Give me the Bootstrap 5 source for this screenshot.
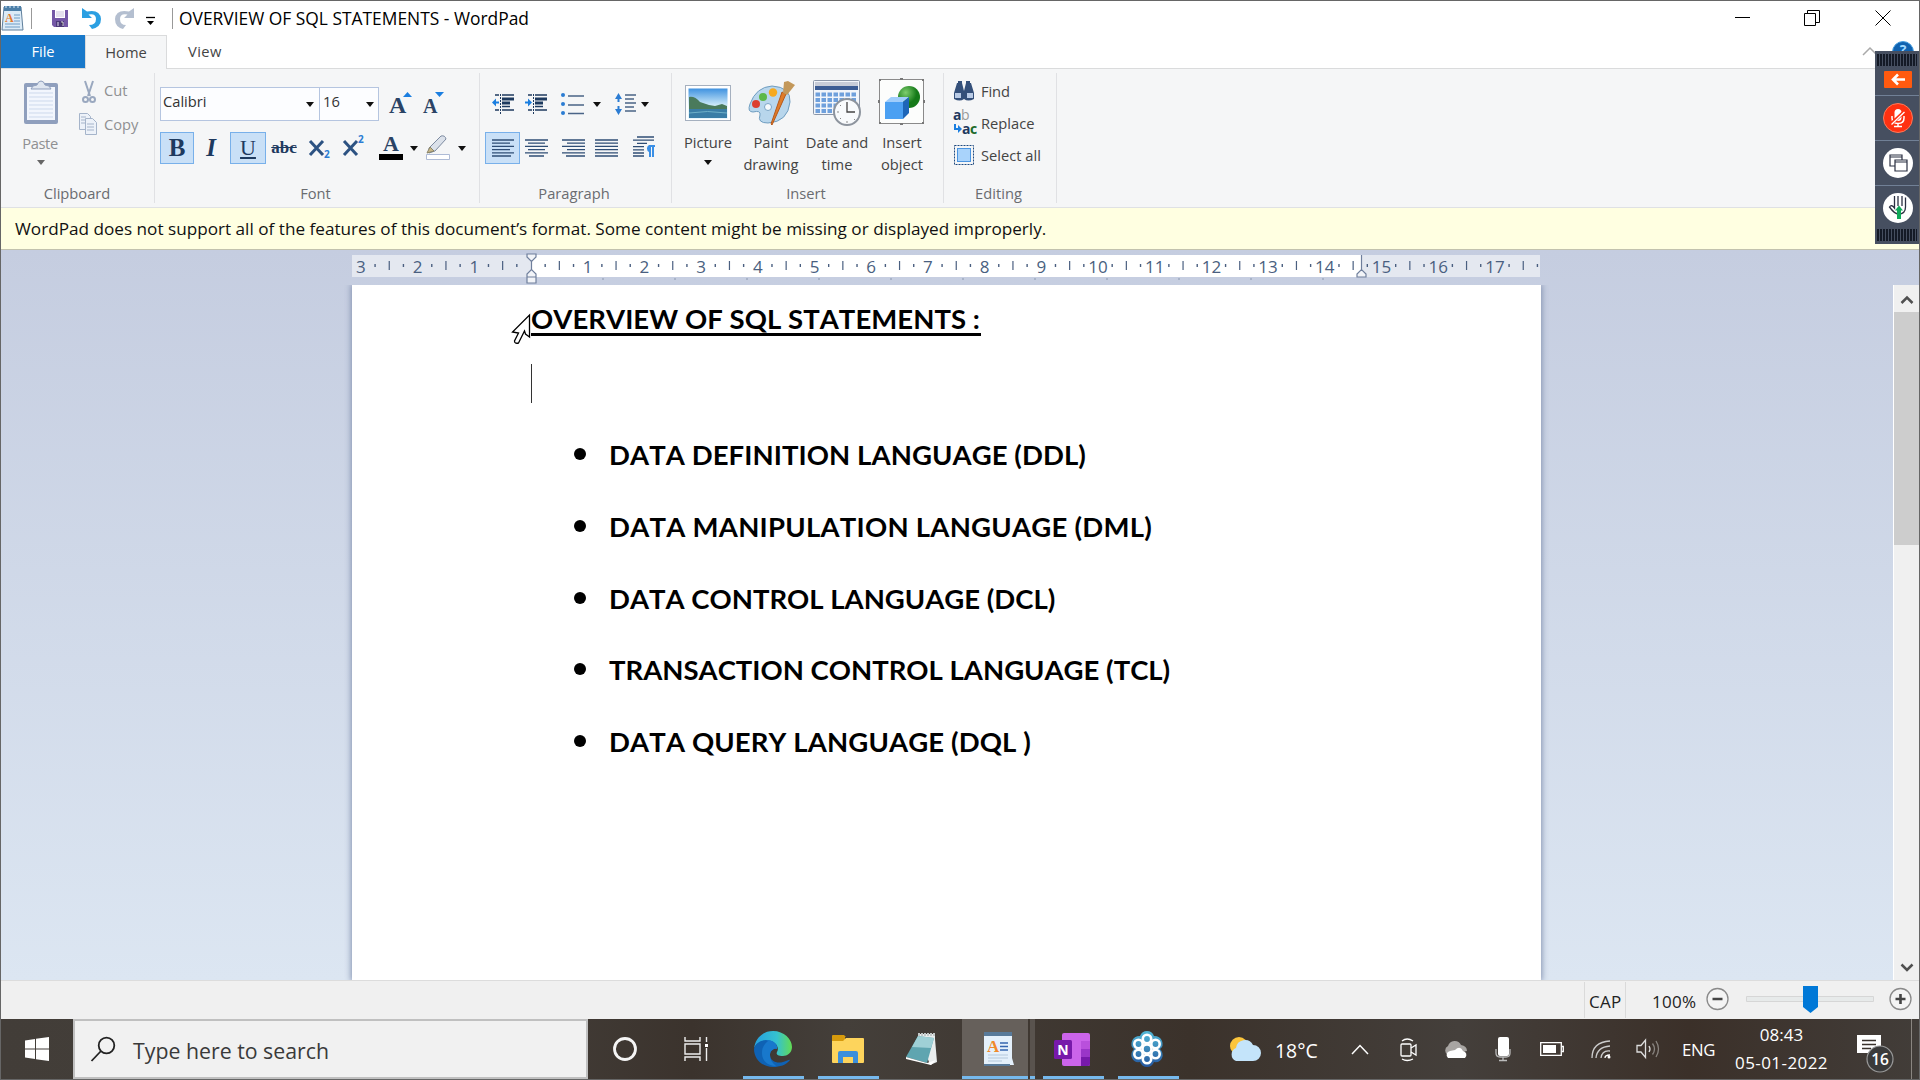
<!DOCTYPE html>
<html lang="en">
<head>
<meta charset="utf-8">
<title>OVERVIEW OF SQL STATEMENTS - WordPad</title>
<link rel="stylesheet" href="https://cdn.jsdelivr.net/npm/bootstrap@5.3.0/dist/css/bootstrap.min.css">
<style>
  html, body { height: 100%; overflow: hidden; }
  body { font-family: "Open Sans", "Noto Sans", sans-serif; font-size: 14.7px; line-height: 20px; color: #444; }
  svg { display: block; flex: none; overflow: visible; }
  .desk { width: 1920px; height: 1080px; background: #666; padding: 1px 1px 0 1px; }
  .nw { white-space: nowrap; }

  .titlebar { height: 34px; background: #fff; color: #000; font-size: 17.4px; line-height: 24px; }
  .vline { width: 1px; height: 21px; background: #999; }
  .tabs { height: 34px; background: #fff; border-bottom: 1px solid #dadbdc; }
  .tabs span { padding-bottom: 2px; }
  .tab-file { width: 84px; background: #1979ca; color: #fff; }
  .tab-home { width: 82px; background: #f5f6f7; border: 1px solid #dadbdc; border-bottom: 0; margin-bottom: -1px; }
  .ribbon { height: 139px; background: #f5f6f7; border-bottom: 1px solid #dfe1e4; padding: 4px 0 4px; }
  .rgroup { border-right: 1px solid #e0e1e4; }
  .rlabel { color: #6a6c70; padding-right: 3px; text-align: center; height: 20px; }
  .off { color: #8f9092; }
  .combo { height: 34px; border: 1px solid #b5c5e0; background: #fcfdff; color: #333; line-height: 20px; }
  .combo span { padding-bottom: 6px; }
  .tb { height: 32px; display: flex; align-items: center; justify-content: center; flex: none; color: #1e3a5f; }
  .tb-on { background: #c9e0f7; border: 1px solid #78b0ea; }
  .serif { font-family: "Liberation Serif", serif; }
  .caret { width: 0; border: 4px solid transparent; border-top: 5px solid #111; border-bottom: 0; }
  .big { text-align: center; line-height: 21.5px; }

  .notice { height: 42px; background: #ffffe1; color: #111; font-size: 17.17px; border-bottom: 1px solid #c2c2ae; padding-top: 1px; }
  .work { height: 730px; background: linear-gradient(#c5cde0, #dce6f2); }
  .ruler { height: 35px; }
  .sheet { width: 1189px; height: 695px; background: #fff; box-shadow: 0 0 6px 1px #8492b0; color: #000;
           font-family: Lato, sans-serif; font-weight: 700; font-size: 27.5px; font-kerning: none; line-height: 40px; padding: 14px 0 0 179px; clip-path: inset(0 -8px 0 -8px); }
  .sheet h1 { font: inherit; margin: 0; border-bottom: 3px solid #000; width: 450px; line-height: 40px; height: 37px; letter-spacing: .05px; }
  .sheet ul { list-style: none; margin: 0; padding: 32px 0 0 43px; }
  .sheet li { height: 71.8px; }
  .sheet li:nth-child(1) { letter-spacing: .08px; }
  .sheet li:nth-child(2) { letter-spacing: .25px; }
  .sheet li:nth-child(5) { letter-spacing: .13px; }
  .dot { width: 12px; height: 12px; border-radius: 50%; background: #000; margin: 13px 23px 0 0; }
  .insertion { width: 1px; height: 39px; background: #333; margin-top: 28px; }
  .sbar { width: 26px; background: #f0f0f0; border-left: 1px solid #fff; }
  .sthumb { height: 233px; background: #cdcdcd; }

  .status { height: 39px; background: #f0f0f0; border-top: 1px solid #dcdcdc; font-size: 17px; color: #222; }
  .status span { padding-top: 3px; letter-spacing: .3px; }
  .ssep { width: 1px; height: 36px; background: #dadada; }
  .taskbar { height: 61px; border-bottom: 1px solid #666; color: #fff;
     background: linear-gradient(90deg, #423d38 0, #45403b 24%, #3b332d 36%, #443f3a 44%, #3b322b 62%, #443f3b 76%, #3b3029 88%, #423d39 100%); }
  .search { width: 515px; background: #f1f1f1; border: 2px solid #c0c0c0; color: #3a3a3a; font-size: 21.3px; }
  .task { width: 61px; height: 60px; display: flex; align-items: center; justify-content: center; flex: none; }
  .run { border-bottom: 3px solid #76b9ed; padding-top: 3px; }
  .cur { background: #66605b; width: 66px; }

  .dock { position: absolute; left: 1875px; top: 51px; width: 44px; height: 193px; background: #464f60; }
  .hatch { height: 12px; margin: 0 2px; background: repeating-linear-gradient(90deg, #141a26 0 2px, #464f60 2px 3px); }
  .dcell { height: 45px; border-bottom: 1px solid #718096; padding-left: 2px; }
  .over { position: absolute; }
</style>
<script src="https://cdn.jsdelivr.net/npm/bootstrap@5.3.0/dist/js/bootstrap.bundle.min.js"></script>
</head>
<body>
<div class="desk d-flex flex-column position-relative">

  <!-- title bar -->
  <div class="titlebar d-flex align-items-center">
    <svg class="ms-0" width="24" height="28" viewBox="0 0 24 28"><path d="M3 3h17l2 23H1z" fill="#dcebf7" stroke="#5f7f9c"/><path d="M3 2h17v5H3z" fill="#4c7fa8"/><path d="M4 3h2M8 3h2M12 3h2M16 3h2" stroke="#d8ecfa"/><text x="4" y="18" class="serif" font-size="12" font-weight="700" fill="#e37b2c">A</text><path d="M13 11h6M13 14h6M13 17h6M4 20h15M4 23h15" stroke="#6f9cc4"/></svg>
    <div class="vline" style="margin-left:6px"></div>
    <svg style="margin-left:20px" width="16" height="17" viewBox="0 0 16 17"><path d="M0 0h16v17H2l-2-2z" fill="#7458a6"/><path d="M3 0h10v8H3z" fill="#fff"/><path d="M4 2h8M4 4h8M4 6h8" stroke="#c9c2dc"/><path d="M4 11h8v6H4z" fill="#4b3878"/><path d="M6 12v4M9 12h2v4" stroke="#e6e0f2"/></svg>
    <svg style="margin-left:14px" width="20" height="21" viewBox="0 0 20 21"><path d="M0 0v10h10L6.500 6.500Q14 5 14 11t-7 6l3 4q9-2 9-10Q18 1 5 3.500z" fill="#2b9fe2"/></svg>
    <svg style="margin-left:12px" width="20" height="21" viewBox="0 0 20 21"><path d="M20 0v10H10l3.500-3.500Q6 5 6 11t6 6l-3 4Q1 19 1 11 2 1 15 3.500z" fill="#b4bfd0"/></svg>
    <svg style="margin-left:12px;margin-top:6px" width="10" height="10" viewBox="0 0 10 10"><path d="M0 1.500h9" stroke="#000" stroke-width="1.300"/><path d="M1 5h7L4.500 9z"/></svg>
    <div class="vline" style="margin-left:16px"></div>
    <span class="nw" style="margin-left:6px">OVERVIEW OF SQL STATEMENTS - WordPad</span>
    <svg class="ms-auto" style="margin-right:28px" width="156" height="16" viewBox="0 0 156 16" fill="none" stroke="#000"><path d="M0 7.500h15M69.500 3.500h11v12h-11zM72.500 3.500v-3h12v12h-4M140.500.500l15 15M155.500.500l-15 15"/></svg>
  </div>

  <!-- tabs -->
  <div class="tabs d-flex">
    <div class="tab-file d-flex justify-content-center align-items-center"><span>File</span></div>
    <div class="tab-home d-flex justify-content-center align-items-center"><span>Home</span></div>
    <div class="d-flex align-items-center" style="padding-left:21px"><span style="letter-spacing:.4px">View</span></div>
    <svg class="ms-auto" style="margin-right:5px" width="51" height="34" viewBox="0 0 51 34"><path d="M0 20l7-7 7 7" fill="none" stroke="#aaa" stroke-width="1.500"/><circle cx="40" cy="17" r="10.500" fill="#0f62b0" stroke="#4aa0e0"/><text x="40" y="20" font-size="14" font-weight="700" fill="#9fd8ff" text-anchor="middle">?</text></svg>
  </div>

  <!-- ribbon -->
  <div class="ribbon d-flex">
    <div class="rgroup d-flex flex-column justify-content-between" style="width:154px">
      <div class="d-flex off">
        <div class="d-flex flex-column align-items-center" style="width:78px;padding-top:8px;padding-left:2px">
          <svg width="36" height="44" viewBox="0 0 36 44"><rect x="1" y="2" width="34" height="41" rx="2" fill="#8f9fbd"/><path d="M4 6h28v33H4z" fill="#f2f6fd"/><path d="M6 12h24M6 16h24M6 20h24M6 24h24M6 28h24M6 32h24M6 36h24" stroke="#cdd9ec"/><path d="M8 8q1-4 6-4 1-4 4-4t4 4q5 0 6 4z" fill="#dfe6f0" stroke="#8f9fbd"/></svg>
          <span style="margin-top:8px;letter-spacing:-.4px;margin-right:2px">Paste</span>
          <i class="caret" style="border-top-color:#666;margin-top:7px;margin-right:1px"></i>
        </div>
        <div>
          <div class="d-flex align-items-center" style="margin-top:7px"><svg style="margin:0 8px 0 3px" width="14" height="23" viewBox="0 0 14 23" fill="none" stroke="#9aa8bf" stroke-width="2"><path d="M3 0l5 15M11 0L6 15"/><circle cx="3.500" cy="18.500" r="2.500"/><circle cx="10.500" cy="18.500" r="2.500"/></svg><span class="pb-1">Cut</span></div>
          <div class="d-flex align-items-center" style="margin-top:9px"><svg style="margin:0 7px 0 0" width="18" height="22" viewBox="0 0 18 22" fill="#edf2f9" stroke="#a5b4ca"><path d="M.500.500h8l3 3v13H.500z"/><path d="M6.500 5.500h7l4 4v12h-11z"/><path d="M8 11h7M8 14h7M8 17h7M2 4h5M2 7h4M2 10h4"/></svg><span>Copy</span></div>
        </div>
      </div>
      <div class="rlabel" style="padding-right:1px"><span>Clipboard</span></div>
    </div>

    <div class="rgroup d-flex flex-column justify-content-between" style="width:325px">
      <div style="padding:14px 0 0 5px">
        <div class="d-flex align-items-center">
          <div class="combo d-flex align-items-center" style="width:160px;padding-left:2px"><span>Calibri</span><i class="caret ms-auto" style="margin-right:5px"></i></div>
          <div class="combo d-flex align-items-center" style="width:60px;margin-left:-1px;padding-left:3px"><span>16</span><i class="caret ms-auto" style="margin-right:4px"></i></div>
          <div class="tb" style="width:44px"><svg width="24" height="24" viewBox="0 0 24 24"><text x="0" y="21" class="serif" font-weight="700" font-size="24" fill="#2a4365">A</text><path d="M14 5l4.500-5L23 5z" fill="#1a7ee0"/></svg></div>
          <div class="tb" style="width:22px"><svg width="22" height="24" viewBox="0 0 22 24"><text x="0" y="21" class="serif" font-weight="700" font-size="20" fill="#2a4365">A</text><path d="M12 0l4.500 5L21 0z" fill="#1a7ee0"/></svg></div>
        </div>
        <div class="d-flex align-items-center" style="margin-top:11px">
          <div class="tb tb-on serif fw-bold" style="width:34px;font-size:25px">B</div>
          <div class="tb serif fst-italic fw-bold" style="width:34px;font-size:25px">I</div>
          <div class="tb tb-on serif text-decoration-underline" style="width:36px;margin-left:2px;font-size:22px">U</div>
          <div class="tb serif fw-bold text-decoration-line-through" style="width:36px;font-size:17px">abc</div>
          <div class="tb" style="width:36px"><svg width="22" height="20" viewBox="0 0 22 20"><path d="M1 3l13 14M14 3L1 17" stroke="#2c5282" stroke-width="3"/><text x="15" y="20" font-size="10" font-weight="700" fill="#2b7cd3">2</text></svg></div>
          <div class="tb" style="width:32px"><svg width="22" height="20" viewBox="0 0 22 20"><path d="M1 3l13 14M14 3L1 17" stroke="#2c5282" stroke-width="3"/><text x="15" y="5" font-size="10" font-weight="700" fill="#2b7cd3">2</text></svg></div>
          <div class="tb" style="width:42px"><svg width="24" height="24" viewBox="0 0 24 24"><text x="12" y="15" text-anchor="middle" class="serif" font-weight="700" font-size="22" fill="#2a4365">A</text><path d="M0 18h24v6H0z"/></svg></div>
          <i class="caret" style="margin-left:-2px"></i>
          <div class="tb" style="width:40px"><svg width="24" height="24" viewBox="0 0 24 24"><path d="M3 12L15 0q4-1 5 3L9 15l-6 2z" fill="#dbe1ea" stroke="#7c8aa0"/><path d="M1 17l3-6 4 4z" fill="#c9b98a" stroke="#8a8468"/><path d="M.500 18.500h23v5H.500z" fill="#fff" stroke="#aebbd6"/></svg></div>
          <i class="caret"></i>
        </div>
      </div>
      <div class="rlabel"><span>Font</span></div>
    </div>

    <div class="rgroup d-flex flex-column justify-content-between" style="width:192px">
      <div style="padding:14px 0 0 5px">
        <div class="d-flex align-items-center" style="height:34px">
          <div class="tb" style="width:36px"><svg width="22" height="20" viewBox="0 0 22 20" stroke="#1e3a5f" stroke-width="1.500"><path d="M3 1h4M3 16h4M10 1h12M10 16h12M10 12.500h8"/><path d="M10 5h12M10 9h8" stroke-width="3"/><path d="M8.500 0v20" stroke-width="1" stroke-dasharray="2 1"/><path d="M0 8.500l4-4v3h3v2H4v3z" fill="#1a7ee0" stroke="none"/></svg></div>
          <div class="tb" style="width:28px;padding-left:2px"><svg width="22" height="20" viewBox="0 0 22 20" stroke="#1e3a5f" stroke-width="1.500"><path d="M3 1h4M3 16h4M10 1h12M10 16h12M10 12.500h8"/><path d="M10 5h12M10 9h8" stroke-width="3"/><path d="M8.500 0v20" stroke-width="1" stroke-dasharray="2 1"/><path d="M7 8.500l-4-4v3H0v2h3v3z" fill="#1a7ee0" stroke="none"/></svg></div>
          <div class="tb" style="width:47px"><svg width="23" height="22" viewBox="0 0 23 22"><g fill="#2b7cd3"><circle cx="2" cy="2" r="2"/><circle cx="2" cy="11" r="2"/><circle cx="2" cy="20" r="2"/></g><path d="M7 3h16M7 12h16M7 20.500h16" stroke="#4a6487" stroke-width="1.500"/></svg></div>
          <i class="caret" style="margin-left:-3px"></i>
          <div class="tb" style="width:33px;margin-left:8px"><svg width="21" height="22" viewBox="0 0 21 22"><path d="M3.500 0l3.500 6h-2.500v3h-2V6H0zM3.500 22L0 16h2.500v-3h2v3H7z" fill="#2b7cd3"/><path d="M10 2h11M10 6h9M10 10h11M10 14h9M10 18h11" stroke="#4a6487" stroke-width="1.500"/></svg></div>
          <i class="caret" style="margin-left:-1px"></i>
        </div>
        <div class="d-flex align-items-center" style="margin-top:11px">
          <div class="tb tb-on" style="width:35px"><svg width="22" height="18" viewBox="0 0 22 18" stroke="#2f4d75" stroke-width="1.300"><path d="M0 1h22M0 4.200h18M0 7.400h22M0 10.600h18M0 13.800h22M0 17h19"/></svg></div>
          <div class="tb" style="width:33px"><svg width="23" height="18" viewBox="0 0 23 18" stroke="#2f4d75" stroke-width="1.300"><path d="M0 1h23M3 4.200h17M0 7.400h23M3 10.600h17M0 13.800h23M4 17h15"/></svg></div>
          <div class="tb" style="width:40px"><svg width="23" height="18" viewBox="0 0 23 18" stroke="#2f4d75" stroke-width="1.300"><path d="M0 1h23M5 4.200h18M0 7.400h23M5 10.600h18M0 13.800h23M4 17h19"/></svg></div>
          <div class="tb" style="width:27px"><svg width="23" height="18" viewBox="0 0 23 18" stroke="#2f4d75" stroke-width="1.300"><path d="M0 1h23M0 4.200h23M0 7.400h23M0 10.600h23M0 13.800h23M0 17h23"/></svg></div>
          <div class="tb" style="width:48px;padding-bottom:3px"><svg width="22" height="21" viewBox="0 0 22 21"><path d="M4 1h17M0 4.200h21M4 7.400h10M0 10.600h11M0 13.800h11M0 17h11M0 20h11" stroke="#2f4d75" stroke-width="1.300"/><path d="M22 9h-6a4 4 0 0 0 0 7v5h2V11h1v10h2V11h1z" fill="#3a8fe6"/></svg></div>
        </div>
      </div>
      <div class="rlabel"><span>Paragraph</span></div>
    </div>

    <div class="rgroup d-flex flex-column justify-content-between" style="width:272px">
      <div class="d-flex" style="padding:7px 0 0 3px">
        <div class="big d-flex flex-column align-items-center" style="width:66px">
          <svg width="46" height="46" viewBox="0 0 46 46"><defs><linearGradient id="sky" x1="0" y1="0" x2="0" y2="1"><stop offset="0" stop-color="#3f92e0"/><stop offset=".6" stop-color="#d8f0fa"/><stop offset="1" stop-color="#cfeaf8"/></linearGradient></defs><rect x=".5" y="5.500" width="45" height="35" fill="#fff" stroke="#a5b0bf"/><path d="M3.500 8.500h39v30h-39z" fill="url(#sky)"/><path d="M4 17q6-1 11 5l9 3 6 1 7-2 5 2v4H4z" fill="#4a7a5c"/><path d="M4 29h38v9H4z" fill="#3a7da6"/><path d="M4 33q18-3 38 0" stroke="#6fb0c8" fill="none"/></svg>
          <span style="margin-top:6px">Picture</span><i class="caret" style="margin-top:6px"></i>
        </div>
        <div class="big d-flex flex-column align-items-center" style="width:60px">
          <svg width="47" height="46" viewBox="0 0 47 46"><path d="M24 6Q43 7 42 22 40 42 20 43 9 43 12 35 13 30 5 32-1 32 2 24 8 7 24 6z" fill="#b8d6ec" stroke="#6f9dc0"/><circle cx="8" cy="24" r="4" fill="#dc3f2f"/><circle cx="15" cy="17" r="4" fill="#5cb848"/><circle cx="25" cy="12.500" r="4.200" fill="#f6a91e"/><circle cx="20" cy="27" r="3.500" fill="#f5f9fc" stroke="#7ba5c6"/><path d="M34 12l4 2-14 31-1-1z" fill="#e07b28" stroke="#b5581a"/><path d="M36 2l4-1 7 4-8 10-4-2z" fill="#c3985a"/></svg>
          <span style="margin-top:6px">Paint</span><span>drawing</span>
        </div>
        <div class="big d-flex flex-column align-items-center" style="width:72px">
          <svg width="48" height="46" viewBox="0 0 48 46"><rect x=".5" y=".5" width="46" height="34" rx="1" fill="#f2f5fa" stroke="#8b96a8"/><path d="M2 2h43v4H2z" fill="#c7ccd8"/><path d="M2 6h43v4H2z" fill="#3b5c94"/><g stroke="#6fa0dc" stroke-width="4" stroke-dasharray="4.500 1.500"><path d="M2.500 14.500h41M2.500 20h41M2.500 25.500h41M2.500 31h20"/></g><circle cx="34" cy="32" r="13" fill="#f8fafc" stroke="#8d949e" stroke-width="2"/><path d="M34 22v10h8" fill="none" stroke="#444" stroke-width="1.300"/><path d="M34 41v2M24 32h2M27 25l1 1M41 39l1 1M27 39l1-1" stroke="#888"/></svg>
          <span style="margin-top:6px" class="nw">Date and</span><span>time</span>
        </div>
        <div class="big d-flex flex-column align-items-center" style="width:60px;margin-left:-1px">
          <svg width="46" height="46" viewBox="0 0 46 46"><defs><radialGradient id="ball" cx=".35" cy=".3"><stop offset="0" stop-color="#7fce6e"/><stop offset="1" stop-color="#157a18"/></radialGradient></defs><g transform="translate(0 -1)"><rect x=".5" y=".5" width="44" height="44" fill="#fcfdfc" stroke="#8a8a8a"/><g fill="#777"><path d="M0 0h2v2H0zM21-1h3v2h-3zM43 0h2v2h-2zM-1 21h2v3h-2zM44 21h2v3h-2zM0 43h2v2H0zM21 44h3v2h-3zM43 43h2v2h-2z"/></g><circle cx="30" cy="18" r="11" fill="url(#ball)"/><path d="M6 23l6-5h18l-6 5z" fill="#9fcdfb"/><path d="M6 23h18v17H6z" fill="#4ba0f2"/><path d="M24 23l6-5v16l-6 6z" fill="#1e66b8"/></g></svg>
          <span style="margin-top:6px">Insert</span><span>object</span>
        </div>
      </div>
      <div class="rlabel"><span>Insert</span></div>
    </div>

    <div class="rgroup d-flex flex-column justify-content-between" style="width:113px">
      <div style="padding:6px 0 0 9px">
        <div class="d-flex align-items-center" style="height:24px"><svg width="22" height="20" viewBox="0 0 22 20" fill="#34507a"><path d="M4 2h5l2 8v8q-4 3-10 0V12zM18 2h-5l-2 8v8q4 3 10 0V12z"/><path d="M2 12h6v5H2zM14 12h6v5h-6z" fill="#b9cbe6"/><path d="M5 0h4v3H5zM13 0h4v3h-4z"/></svg><span style="margin-left:6px;letter-spacing:-.1px">Find</span></div>
        <div class="d-flex align-items-center" style="height:24px;margin-top:8px"><svg width="24" height="24" viewBox="0 0 24 24" font-weight="700"><text x="0" y="9" font-size="14" fill="#1e3a5f">a</text><text x="8" y="9" font-size="14" font-weight="400" fill="#999">b</text><text x="9" y="23" font-size="14" fill="#1e3a5f">a</text><text x="17" y="23" font-size="14" fill="#1c6b2a">c</text><path d="M2 13v5h4" fill="none" stroke="#1a7ee0" stroke-width="2"/><path d="M5 14l4 4-4 4z" fill="#1a7ee0"/></svg><span style="margin-left:4px">Replace</span></div>
        <div class="d-flex align-items-center" style="height:24px;margin-top:8px"><svg width="22" height="20" viewBox="0 0 22 20"><rect x="1.500" y=".5" width="19" height="19" fill="none" stroke="#1e4a80" stroke-dasharray="2 1"/><rect x="4.500" y="3.500" width="13" height="13" fill="#a9d3fb" stroke="#4a94e0"/></svg><span class="nw" style="margin-left:6px">Select all</span></div>
      </div>
      <div class="rlabel"><span>Editing</span></div>
    </div>
  </div>

  <div class="notice d-flex align-items-center nw"><span style="margin-left:14px">WordPad does not support all of the features of this document’s format. Some content might be missing or displayed improperly.</span></div>

  <!-- workspace -->
  <div class="work d-flex">
    <div style="width:351px"></div>
    <div>
      <svg class="ruler" id="ruler" width="1189" height="35"></svg>
      <div class="sheet">
        <h1 class="nw">OVERVIEW OF SQL STATEMENTS :</h1>
        <div class="insertion"></div>
        <ul>
          <li class="d-flex nw"><i class="dot"></i><span>DATA DEFINITION LANGUAGE (DDL)</span></li>
          <li class="d-flex nw"><i class="dot"></i><span>DATA MANIPULATION LANGUAGE (DML)</span></li>
          <li class="d-flex nw"><i class="dot"></i><span>DATA CONTROL LANGUAGE (DCL)</span></li>
          <li class="d-flex nw"><i class="dot"></i><span>TRANSACTION CONTROL LANGUAGE (TCL)</span></li>
          <li class="d-flex nw"><i class="dot"></i><span>DATA QUERY LANGUAGE (DQL )</span></li>
        </ul>
      </div>
    </div>
    <div class="sbar ms-auto d-flex flex-column align-items-center" style="margin-top:35px">
      <svg width="14" height="27" viewBox="0 0 14 27"><path d="M1.500 18l5.500-5.500 5.500 5.500" fill="none" stroke="#505050" stroke-width="2.500"/></svg>
      <div class="sthumb w-100"></div>
      <svg class="mt-auto" width="14" height="27" viewBox="0 0 14 27"><path d="M1.500 11.500L7 17l5.500-5.500" fill="none" stroke="#505050" stroke-width="2.500"/></svg>
    </div>
  </div>

  <!-- status bar -->
  <div class="status d-flex align-items-center">
    <div class="ssep" style="margin-left:1583px"></div>
    <span style="margin-left:4px;width:33px">CAP</span>
    <div class="ssep" style="margin-left:3px"></div>
    <span style="margin-left:26px;width:44px">100%</span>
    <svg style="margin-left:9px" width="210" height="30" viewBox="0 0 210 30"><g fill="#f4f4f4" stroke="#8a8a8a" stroke-width="1.300"><circle cx="12.500" cy="14" r="10.500"/><circle cx="195.500" cy="14" r="10.500"/></g><path d="M7.500 14h10M190.500 14h10M195.500 9v10" stroke="#444" stroke-width="2.600"/><path d="M41.500 11.500h127v5h-127z" fill="#e7eaea" stroke="#d6d6d6"/><path d="M98 1h15v21l-7.500 6-7.500-6z" fill="#0078d7"/></svg>
  </div>

  <!-- taskbar -->
  <div class="taskbar d-flex">
    <div class="task" style="width:72px"><svg width="24" height="24" viewBox="0 0 24 24" fill="#fff"><path d="M0 3.400l10-1.400v9.500H0zM11 1.800L24 0v11.500H11zM0 12.500h10V22L0 20.600zM11 12.500h13V24l-13-1.800z"/></svg></div>
    <div class="search d-flex align-items-center"><svg style="margin-left:16px" width="25" height="25" viewBox="0 0 25 25" fill="none" stroke="#222" stroke-width="1.800"><circle cx="15.500" cy="8.500" r="7.800"/><path d="M10 14L.500 24"/></svg><span class="nw" style="margin-left:17px;padding-top:3px">Type here to search</span></div>
    <div class="task" style="width:73px"><svg width="26" height="26" viewBox="0 0 26 26"><circle cx="13" cy="13" r="10.500" fill="none" stroke="#f5f5f5" stroke-width="2.800"/></svg></div>
    <div class="task" style="width:70px;padding-left:1px"><svg width="25" height="24" viewBox="0 0 25 24" fill="none" stroke="#eee" stroke-width="1.400"><path d="M1 0v4h15V0M1 24v-4h15v4M1 7h15v10H1zM22.500 0v5M22.500 11v13"/><path d="M21 7h3v3h-3z" fill="#fff" stroke="none"/></svg></div>
    <div class="task run" style="margin-left:12px;padding-right:2px"><svg width="38" height="36" viewBox="0 0 38 36"><defs><linearGradient id="e1" x1="0" x2="1"><stop offset="0" stop-color="#25a0e0"/><stop offset=".6" stop-color="#35c1d0"/><stop offset="1" stop-color="#62dc54"/></linearGradient></defs><path d="M0 18C1 7 9 0 19 0c11 0 19 8 19 16 0 6-5 9-9 9-6 0-7-2-6-4 3-5-2-11-9-11C7 10 1 13 0 18z" fill="url(#e1)"/><path d="M0 18c1-5 6-9 12-9 8 0 12 5 11 9-1-1-7 0-7 6 0 6 7 9 13 7 4-1 7-3 7-2-4 5-10 7-17 7C8 36 0 28 0 18z" fill="#0f62b4"/><path d="M12 9c8 0 12 5 11 9-1-1-7 0-7 6 0 4 2 8 6 11-8 0-14-5-14-13 0-5 2-9 6-12z" fill="#1878cc"/></svg></div>
    <div class="task run" style="margin-left:14px;padding-right:2px"><svg width="32" height="28" viewBox="0 0 32 28"><path d="M0 1q0-1 1-1h11l2 2h-1v4H0z" fill="#d69a0c"/><path d="M0 6h11l3-3h17q1 0 1 1v23q0 1-1 1H1q-1 0-1-1z" fill="#fdd45c"/><path d="M6 28V18q0-2 2-2h16q2 0 2 2v10h-5v-6H11v6z" fill="#3b8fdb"/></svg></div>
    <div class="task" style="margin-left:13px;width:60px"><svg width="32" height="34" viewBox="0 0 32 34"><path d="M13 2h16v5l2 23-7 3z" fill="#e9eded"/><path d="M12 4l16 2-7 25L0 25z" fill="#5fa5b0"/><path d="M12 4l16 2-3 10L6 15z" fill="#9fd0d6"/><path d="M12 2.500h18" stroke="#c3c9c9" stroke-width="3" stroke-dasharray="2 1"/><path d="M0 25l21 6 9-3-5 5L0 27z" fill="#fff"/></svg></div>
    <div class="task run cur" style="margin-left:10px;padding-left:7px"><svg width="31" height="34" viewBox="0 0 31 34"><path d="M1 2h28v24l2 7H1z" fill="#e4f0fb"/><path d="M1 0h28v4H1zM1 32h26v2H1z" fill="#587a9a"/><text x="4" y="20" font-size="17" font-weight="700" class="serif" fill="#f08a2c">A</text><path d="M17 11h8M17 14.500h8M17 18h8" stroke="#3565b0" stroke-width="1.500"/><path d="M5 23h20M5 26h20M5 29h14" stroke="#b4c8dc"/></svg></div>
    <div class="task run" style="margin-left:2px;width:5px;background:#59534e"></div>
    <div class="task run" style="margin-left:8px;padding-right:3px"><svg width="36" height="33" viewBox="0 0 36 33"><rect x="8" width="28" height="33" rx="2" fill="#cb64ea"/><path d="M27 16h9v8h-9z" fill="#9a35c8"/><path d="M27 24h9v7q0 2-2 2h-7z" fill="#7719aa"/><path d="M27 8h9v8h-9z" fill="#b950dc"/><rect y="7" width="18" height="19" rx="1.500" fill="#7719aa"/><text x="9" y="21.500" text-anchor="middle" font-size="14" font-weight="700" fill="#fff">N</text></svg></div>
    <div class="task run" style="margin-left:14px;padding-right:3px"><svg width="34" height="36" viewBox="0 0 34 36"><defs><linearGradient id="gt" x1="0" y1="0" x2="0" y2="1"><stop offset="0" stop-color="#52b8d6"/><stop offset="1" stop-color="#24569e"/></linearGradient></defs><path d="M17 0q5 0 7 5 6 0 8 5t-2 8q4 4 2 9t-8 4q-2 5-7 5t-7-5q-6 1-8-4t2-9q-4-3-2-8t8-5q2-5 7-5z" fill="url(#gt)"/><g fill="none" stroke="#fff" stroke-width="2.600"><circle cx="17" cy="8" r="4.200"/><circle cx="17" cy="28" r="4.200"/><circle cx="8.500" cy="13" r="4.200"/><circle cx="25.500" cy="13" r="4.200"/><circle cx="8.500" cy="23" r="4.200"/><circle cx="25.500" cy="23" r="4.200"/><circle cx="17" cy="18" r="4.500"/></g></svg></div>

    <div class="d-flex align-items-center" style="margin-left:50px;font-size:17.500px">
      <svg width="31" height="24" viewBox="0 0 31 24"><circle cx="10" cy="9" r="9" fill="#fbc53c"/><path d="M7 24a7 7 0 0 1 0-13 9 9 0 0 1 17-3 8 8 0 0 1 0 16z" fill="#c4e4fa"/></svg>
      <span class="nw" style="margin-left:15px;width:43px;font-size:19.4px;padding-top:3px">18°C</span>
      <svg style="margin-left:33px" width="18" height="11" viewBox="0 0 18 11"><path d="M1 10l8-8.500 8 8.500" fill="none" stroke="#fff" stroke-width="1.500"/></svg>
      <svg style="margin-left:31px" width="17" height="23" viewBox="0 0 17 23" fill="none" stroke="#fff" stroke-width="1.300"><rect x="1" y="6" width="10" height="12" rx="1"/><path d="M11 10l5-3v10l-5-3M2 3q5-4 11 0M2 21q5 3 11 0"/></svg>
      <svg style="margin-left:26px" width="26" height="17" viewBox="0 0 26 17"><path d="M5 14a5 5 0 0 1 0-9 7 7 0 0 1 13-1q6 1 6 6z" fill="#a8a5a2"/><path d="M5 17a4 4 0 0 1 2-7l5-1q5-5 8 1a4 4 0 0 1 2 7z" fill="#fff"/></svg>
      <svg style="margin-left:26px" width="16" height="24" viewBox="0 0 16 24"><rect x="3" y="0" width="11" height="19" rx="2" fill="#fff"/><path d="M1 12v4q0 4 4 4h6q4 0 4-4v-4M8 20v3M4 23.500h8" fill="none" stroke="#bbb" stroke-width="1.300"/></svg>
      <svg style="margin-left:29px" width="24" height="14" viewBox="0 0 24 14"><path d="M.7.700h20.600v12.600H.700zM22 4.500h1.300v5H22" fill="none" stroke="#fff" stroke-width="1.300"/><path d="M3 3h13v8H3z" fill="#fff"/></svg>
      <svg style="margin-left:27px" width="21" height="19" viewBox="0 0 21 19" fill="none" stroke="#ccc" stroke-width="1.300"><path d="M1 18Q1 2 19 1M5 18Q6 7 19 6M10 18q1-8 9-7"/><path d="M14 18q0-3 5-3" stroke="#fff"/><circle cx="18" cy="17" r="1.500" fill="#fff" stroke="none"/></svg>
      <svg style="margin-left:24px" width="24" height="20" viewBox="0 0 24 20" fill="none" stroke="#ddd" stroke-width="1.300"><path d="M1 6.500h4L9.500 1v17.500L5 13H1z"/><path d="M13 7q2 3 0 6"/><path d="M16.500 4.500q4 5.500 0 11M20 2q5 8 0 16" stroke="#8a8580"/></svg>
      <span style="margin-left:22px;width:33px;font-size:16.8px;letter-spacing:-.35px;padding-top:1px">ENG</span>
      <div class="d-flex flex-column align-items-center" style="margin-left:20px;width:93px;line-height:28px;font-size:17px"><span>08:43</span><span class="nw" style="letter-spacing:.43px">05-01-2022</span></div>
      <svg style="margin-left:28px" width="38" height="40" viewBox="0 0 38 40"><path d="M1 6h24v18h-6l-6 6v-6H1z" fill="#fff"/><path d="M6 11.500h14M6 15.500h14M6 19.500h9" stroke="#3a332d" stroke-width="1.500"/><circle cx="24" cy="30" r="13" fill="#3a3a3a" stroke="#999" stroke-width="1.200"/><text x="24" y="35.500" text-anchor="middle" font-size="15.500" font-weight="600" fill="#fff">16</text></svg>
    </div>
    <div style="width:1px;background:#8a8580;margin-left:auto;margin-right:7px"></div>
  </div>

  <!-- mouse pointer over the page margin -->
  <svg class="over" style="left:511px;top:314px" width="20" height="32" viewBox="0 0 20 32"><path d="M18.500 1v22l-4-3-1-3-6 12q-4 1-4-2l4-8-6-1z" fill="#fff" stroke="#000" stroke-width="1.300"/></svg>

  <!-- webinar control dock -->
  <div class="dock d-flex flex-column">
    <div class="hatch" style="margin-top:3px"></div>
    <div class="d-flex justify-content-center" style="height:30px;padding:5px 0 0 2px;border-bottom:1px solid #718096"><svg width="28" height="17" viewBox="0 0 28 17"><rect width="28" height="17" rx="1" fill="#ff5a0f"/><path d="M21 8.500H10M14 3.500l-5 5 5 5" fill="none" stroke="#fff" stroke-width="2.600"/></svg></div>
    <div class="dcell d-flex justify-content-center align-items-center"><svg width="30" height="30" viewBox="0 0 30 30"><circle cx="15" cy="15" r="14.500" fill="#ff3111" stroke="#ff7a5a"/><rect x="11.500" y="6" width="7" height="12" rx="3.500" fill="#fff"/><path d="M9 13v2q0 5.500 6 5.500t6-5.500v-2M15 20.500V23M11 23.500h8" fill="none" stroke="#fff" stroke-width="1.500"/><path d="M8 21L21 9" stroke="#ff3111" stroke-width="3.500"/><path d="M8.500 21.500L21.500 9" stroke="#fff" stroke-width="1.300"/></svg></div>
    <div class="dcell d-flex justify-content-center align-items-center"><svg width="30" height="30" viewBox="0 0 30 30"><circle cx="15" cy="15" r="15" fill="#fff"/><g fill="#fff" stroke="#2b3042" stroke-width="1.200"><path d="M7 7h12v11H7zM7 9h12"/><path d="M12 12h12v11H12zM12 14h12"/></g></svg></div>
    <div class="d-flex justify-content-center align-items-center" style="height:43px;padding-left:2px"><svg width="30" height="30" viewBox="0 0 30 30"><circle cx="15" cy="15" r="15" fill="#fff"/><path d="M11.500 13V3M15 13V3M19 13V3M22.500 4.500V14q0 7-7 7-4 0-9-7 2-3 5 1V3" fill="none" stroke="#2b3042" stroke-width="1.300"/><path d="M16 12.500l4 5h-2V26h-4v-8.500h-2z" fill="#0fa958"/></svg></div>
    <div class="hatch"></div>
  </div>
</div>

<script>
  // Ruler: one unit is 56.7px, the left margin sits at x = 179 and the right margin at x = 1009.
  (function () {
    var u = 56.7, o = 179, s = '';
    s += '<path d="M0 5h1188v22H0z" fill="#e4e8f0"/><path d="M179 5h830v22H179z" fill="#fff"/>';
    for (var q = -12; q <= 71; q++) {
      if (!q) continue;
      var x = o + q * u / 4;
      if (x < 1 || x > 1187) continue;
      if (q % 4 === 0) s += '<text x="' + x + '" y="23" text-anchor="middle" font-size="17" fill="#4a5f80">' + Math.abs(q / 4) + '</text>';
      else if (q % 2 === 0) s += '<path d="M' + x + ' 11v9" stroke="#4a5f80" stroke-width="1.200"/>';
      else s += '<path d="M' + x + ' 14v3" stroke="#4a5f80" stroke-width="1.400"/>';
    }
    for (var t = 1; t < 12; t++) s += '<path d="M' + (o + t * 72) + ' 28v2" stroke="#8a98b0"/>';
    s += '<g fill="#f2f4f8" stroke="#6f7f9c" stroke-width="1.200"><path d="M175 4h9v3l-4.500 4.500L175 7z"/><path d="M179.500 11v10"/><path d="M175 27v-3l4.500-4.500L184 24v3zM175 27h9v6h-9z"/><path d="M1009.500 5v16M1005 27v-3l4.500-4.500 4.500 4.500v3z"/></g>';
    document.getElementById('ruler').innerHTML = s;
  })();
</script>
</body>
</html>
